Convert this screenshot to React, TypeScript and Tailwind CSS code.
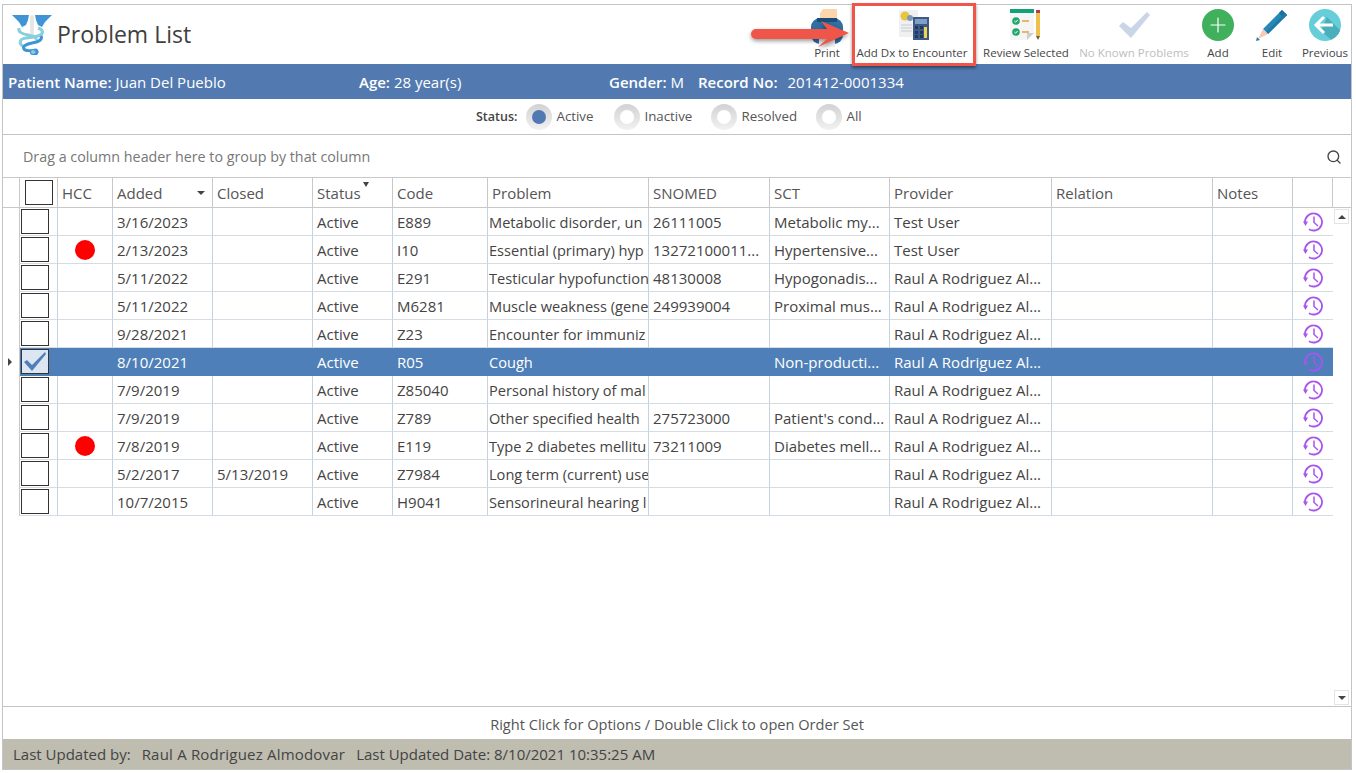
import { Search, Plus } from "lucide-react";

const COLS =
  "grid grid-cols-[17px_38px_55px_100px_100px_80px_95px_161px_121px_120px_162px_161px_80px_40px]";

type Row = {
  added: string;
  closed?: string;
  code: string;
  problem: string;
  snomed?: string;
  sct?: string;
  provider: string;
  hcc?: boolean;
  selected?: boolean;
};

const RAUL = "Raul A Rodriguez Al...";

const rows: Row[] = [
  { added: "3/16/2023", code: "E889", problem: "Metabolic disorder, un", snomed: "26111005", sct: "Metabolic my...", provider: "Test User" },
  { added: "2/13/2023", code: "I10", problem: "Essential (primary) hyp", snomed: "13272100011...", sct: "Hypertensive...", provider: "Test User", hcc: true },
  { added: "5/11/2022", code: "E291", problem: "Testicular hypofunction", snomed: "48130008", sct: "Hypogonadis...", provider: RAUL },
  { added: "5/11/2022", code: "M6281", problem: "Muscle weakness (gene", snomed: "249939004", sct: "Proximal mus...", provider: RAUL },
  { added: "9/28/2021", code: "Z23", problem: "Encounter for immuniz", provider: RAUL },
  { added: "8/10/2021", code: "R05", problem: "Cough", sct: "Non-producti...", provider: RAUL, selected: true },
  { added: "7/9/2019", code: "Z85040", problem: "Personal history of mal", provider: RAUL },
  { added: "7/9/2019", code: "Z789", problem: "Other specified health", snomed: "275723000", sct: "Patient's cond...", provider: RAUL },
  { added: "7/8/2019", code: "E119", problem: "Type 2 diabetes mellitu", snomed: "73211009", sct: "Diabetes mell...", provider: RAUL, hcc: true },
  { added: "5/2/2017", closed: "5/13/2019", code: "Z7984", problem: "Long term (current) use", provider: RAUL },
  { added: "10/7/2015", code: "H9041", problem: "Sensorineural hearing l", provider: RAUL },
];

function Logo() {
  return (
    <svg width="40" height="40" viewBox="0 0 40 40" className="shrink-0">
      <path d="M0 0h17l-1 5-2 5-4 2-3-5-3-3z" fill="#3f94d6" />
      <path d="M40 0H23l1 5 2 5 4 2 3-5 3-3z" fill="#3f94d6" />
      <rect x="18" y="0" width="4" height="24" rx="2" fill="#e6e6e6" />
      <path d="M26 13c6 2 6 6 0 8-6 2-15 1-17 4-2 3 0 6 4 7" fill="none" stroke="#86d0de" strokeWidth="3" />
      <path d="M7 13c-1 4 3 6 9 7 5 1 9 2 8 5" fill="none" stroke="#86d0de" strokeWidth="3" />
      <path d="M29 21c2 4-3 6-9 7-5 1-10 3-8 6 1 2 8 2 12 1 2 1 1 4-1 4-3 0-4-1-4-3" fill="none" stroke="#3f94d6" strokeWidth="3" />
      <circle cx="21" cy="37" r="2" fill="#86d0de" />
    </svg>
  );
}

function PrintIcon() {
  return (
    <svg width="32" height="38" viewBox="0 0 32 38" className="mb-[-6px]">
      <path d="M9 4l3-4h14v14H9z" fill="#fbd6ac" />
      <rect x="0" y="9" width="32" height="26" rx="9" fill="#2f6fa5" />
      <rect x="6" y="9" width="20" height="4" fill="#1c4d78" />
      <rect x="8" y="30" width="16" height="8" fill="#f2f2f2" />
    </svg>
  );
}

function CalcIcon() {
  return (
    <svg width="30" height="30" viewBox="0 0 30 30" className="mb-[1px] ml-[3px]">
      <rect x="0" y="0" width="19" height="27" fill="#eef0f2" />
      <circle cx="6" cy="6" r="4.5" fill="#e9c53f" />
      <circle cx="11" cy="8" r="3" fill="#7d97bd" />
      <path d="M2 15h11M2 18h11M2 21h11" stroke="#c9cdd2" strokeWidth="1" />
      <rect x="14" y="7" width="16" height="23" fill="#3c5a85" />
      <rect x="16" y="9" width="12" height="5" fill="#7f9ec8" />
      <path d="M16 16h3v3h-3zM21 16h3v3h-3zM16 21h3v3h-3zM21 21h3v3h-3zM16 25h3v3h-3zM21 25h3v3h-3z" fill="#23395c" />
      <rect x="25" y="17" width="3" height="11" fill="#f2d34c" />
    </svg>
  );
}

function ReviewIcon() {
  return (
    <svg width="32" height="32" viewBox="0 0 32 32">
      <path d="M0 0h24v24l-7 7H0z" fill="#f4f5f4" />
      <rect x="0" y="0" width="24" height="4" fill="#12a178" />
      <path d="M17 31v-7h7z" fill="#cfcfcf" />
      <circle cx="6" cy="12" r="3.8" fill="#20a76c" />
      <circle cx="6" cy="23" r="3.8" fill="#20a76c" />
      <path d="M4.4 12l1.2 1.2 2-2.2M4.4 23l1.2 1.2 2-2.2" fill="none" stroke="#fff" strokeWidth="1" />
      <path d="M12 12h7M12 23h7" stroke="#e8a13c" strokeWidth="1.5" />
      <rect x="26" y="1" width="4" height="3" fill="#b33a5e" />
      <rect x="26" y="4" width="4" height="23" fill="#efc04a" />
      <path d="M26 27h4l-2 4z" fill="#6b5a3a" />
    </svg>
  );
}

function NoKnownIcon() {
  return (
    <svg width="33" height="26" viewBox="0 0 33 26" className="mb-[3px]">
      <path d="M1 14l4-4 8 6L29 0l3 3-19 23z" fill="#c9d6e8" />
    </svg>
  );
}

function AddIcon() {
  return (
    <div className="flex h-8 w-8 items-center justify-center rounded-full bg-[#41b05c]">
      <Plus size={24} strokeWidth={1.2} className="text-white" />
    </div>
  );
}

function EditIcon() {
  return (
    <svg width="32" height="32" viewBox="0 0 32 32">
      <path d="M7 20L26 1l5 5-19 19z" fill="#2589b8" />
      <path d="M23 4l5 5 3-3-5-5z" fill="#1c6f99" />
      <path d="M10 23L29 4l2 2-19 19z" fill="#1f7aa6" />
      <path d="M7 20l5 5-10 5z" fill="#f6c9b4" />
      <path d="M1 28l3 3-4 1z" fill="#2a7fa8" />
    </svg>
  );
}

function PreviousIcon() {
  return (
    <svg width="32" height="32" viewBox="0 0 32 32">
      <clipPath id="prev-clip">
        <circle cx="16" cy="16" r="16" />
      </clipPath>
      <circle cx="16" cy="16" r="16" fill="#66ced9" />
      <path d="M12 22l6-14 16 16-8 10z" fill="#4aaebd" clipPath="url(#prev-clip)" />
      <path d="M15 8l-8 8 8 8M8 16h16" fill="none" stroke="#fff" strokeWidth="3" />
    </svg>
  );
}

function HistoryIcon() {
  return (
    <svg width="21" height="20" viewBox="0 0 21 20" className="shrink-0">
      <path d="M2 10A8.5 8.5 0 1 1 6 17.2" fill="none" stroke="#a855f0" strokeWidth="1.8" />
      <path d="M0 9.5h5L2.5 14z" fill="#a855f0" />
      <path d="M11 4.5V10.5L15 14" fill="none" stroke="#a855f0" strokeWidth="1.5" />
    </svg>
  );
}

function ToolButton({
  label,
  width,
  muted,
  children,
}: {
  label: string;
  width: string;
  muted?: boolean;
  children: React.ReactNode;
}) {
  return (
    <div className={`flex h-full flex-col items-center justify-end pb-[4px] ${width}`}>
      <div className="flex h-[36px] items-end justify-center pb-[4px]">{children}</div>
      <span className={`text-[11.5px] leading-[15px] whitespace-nowrap ${muted ? "text-[#bdbdbd]" : "text-[#444]"}`}>
        {label}
      </span>
    </div>
  );
}

function Radio({ label, labelWidth, active }: { label: string; labelWidth: string; active?: boolean }) {
  return (
    <div className="flex items-center gap-[4px]">
      <div className="flex h-[26px] w-[26px] items-center justify-center rounded-full bg-gradient-to-b from-[#d2d2d2] to-[#f2f2f2]">
        <div className={`h-[14px] w-[14px] rounded-full ${active ? "bg-[#5079b3]" : "bg-white"}`} />
      </div>
      <span className={`text-[13.3px] whitespace-nowrap text-[#555] ${labelWidth}`}>{label}</span>
    </div>
  );
}

function Box({ checked }: { checked?: boolean }) {
  return (
    <div
      className={`flex h-[25px] w-[28px] items-center justify-center border-[1.5px] border-[#333] ${
        checked ? "bg-[#dce6f2]" : "bg-white"
      }`}
    >
      {checked && (
        <svg width="24" height="20" viewBox="0 0 24 20">
          <path d="M1 10l3-2 5 5L22 0l1 2L9 19z" fill="#4f7fb8" />
        </svg>
      )}
    </div>
  );
}

function Cell({
  children,
  selected,
  tight,
}: {
  children?: React.ReactNode;
  selected?: boolean;
  tight?: boolean;
}) {
  return (
    <div
      className={`overflow-hidden border-r border-b pt-[1px] leading-[26px] whitespace-nowrap ${
        tight ? "pl-[1px] text-[14.6px]" : "pl-[4px] text-[15px]"
      } ${selected ? "border-[#4f7fb8] bg-[#4f7fb8] text-white" : "border-r-[#c5d3e0] border-b-[#d5dce4] text-[#444]"}`}
    >
      {children}
    </div>
  );
}

function HeaderCell({ children }: { children?: React.ReactNode }) {
  return (
    <div className="relative border-r border-[#c8c8c8] pt-[1px] pl-[4px] text-[15px] leading-[28px] whitespace-nowrap text-[#555]">
      {children}
    </div>
  );
}

export default function App() {
  return (
    <div className="h-[773px] w-[1356px] overflow-hidden bg-white pt-[4px] pl-[2px] font-['Open_Sans',sans-serif]">
      <div className="relative flex h-[766px] w-[1350px] flex-col border border-[#c4c4c4]">
        <div className="flex h-[59px] shrink-0 items-center justify-between">
          <div className="flex items-center gap-[5px] pl-[9px]">
            <Logo />
            <h1 className="text-[23px] leading-none font-medium text-[#404040]">Problem List</h1>
          </div>
          <div className="flex h-full items-stretch">
            <ToolButton label="Print" width="w-[44px]">
              <PrintIcon />
            </ToolButton>
            <ToolButton label="Add Dx to Encounter" width="w-[126px]">
              <CalcIcon />
            </ToolButton>
            <ToolButton label="Review Selected" width="w-[102px]">
              <ReviewIcon />
            </ToolButton>
            <ToolButton label="No Known Problems" width="w-[114px]" muted>
              <NoKnownIcon />
            </ToolButton>
            <ToolButton label="Add" width="w-[54px]">
              <AddIcon />
            </ToolButton>
            <ToolButton label="Edit" width="w-[54px]">
              <EditIcon />
            </ToolButton>
            <ToolButton label="Previous" width="w-[52px]">
              <PreviousIcon />
            </ToolButton>
          </div>
        </div>

        <div className="flex h-[35px] shrink-0 items-center bg-[#527ab0] pt-[1px] pl-[5px] text-[15px] text-white">
          <div className="w-[351px]">
            <span className="font-semibold">Patient Name:</span> Juan Del Pueblo
          </div>
          <div className="w-[250px]">
            <span className="font-semibold">Age:</span> 28 year(s)
          </div>
          <div className="w-[89px]">
            <span className="font-semibold">Gender:</span> M
          </div>
          <div>
            <span className="mr-[6px] font-semibold">Record No:</span> 201412-0001334
          </div>
        </div>

        <div className="flex h-[35px] shrink-0 items-center pt-[1px] pl-[473px]">
          <span className="mr-[9px] text-[12.5px] font-semibold text-[#444]">Status:</span>
          <div className="flex gap-[20px]">
            <Radio label="Active" labelWidth="w-[38px]" active />
            <Radio label="Inactive" labelWidth="w-[47px]" />
            <Radio label="Resolved" labelWidth="w-[55px]" />
            <Radio label="All" labelWidth="w-[20px]" />
          </div>
        </div>

        <div className="relative flex-1 border-y border-[#c4c4c4]">
          <div className="flex h-[43px] items-center justify-between border-b border-[#c8c8c8] pt-[1px] pr-[9px] pl-[20px]">
            <span className="text-[14.3px] text-[#777]">Drag a column header here to group by that column</span>
            <Search size={16} strokeWidth={2} className="text-[#444]" />
          </div>

          <div className={`${COLS} h-[30px] border-b border-[#c8c8c8]`}>
            <div className="border-r border-[#c8c8c8]" />
            <div className="flex items-center justify-end border-r border-[#c8c8c8] pr-[4px]">
              <Box />
            </div>
            <HeaderCell>HCC</HeaderCell>
            <HeaderCell>
              Added
              <span className="absolute top-[13px] right-[7px] h-0 w-0 border-x-[4px] border-t-[4px] border-x-transparent border-t-[#444]" />
            </HeaderCell>
            <HeaderCell>Closed</HeaderCell>
            <HeaderCell>
              Status
              <span className="absolute top-[4px] left-[50px] h-0 w-0 border-x-[3px] border-t-[5px] border-x-transparent border-t-[#444]" />
            </HeaderCell>
            <HeaderCell>Code</HeaderCell>
            <HeaderCell>Problem</HeaderCell>
            <HeaderCell>SNOMED</HeaderCell>
            <HeaderCell>SCT</HeaderCell>
            <HeaderCell>Provider</HeaderCell>
            <HeaderCell>Relation</HeaderCell>
            <HeaderCell>Notes</HeaderCell>
            <HeaderCell />
          </div>

          {rows.map((r) => (
            <div key={r.added + r.code} className={`${COLS} h-[28px]`}>
              <div className="flex items-center justify-center border-r border-[#c8c8c8] pr-[2px]">
                {r.selected && (
                  <span className="h-0 w-0 border-y-[4px] border-l-[4px] border-y-transparent border-l-[#444]" />
                )}
              </div>
              <div
                className={`flex items-center border-r border-b pl-[1px] ${
                  r.selected ? "border-[#4f7fb8] bg-[#4f7fb8]" : "border-r-[#c5d3e0] border-b-[#d5dce4]"
                }`}
              >
                <Box checked={r.selected} />
              </div>
              <Cell selected={r.selected}>
                {r.hcc && <div className="mt-[3px] ml-[13px] h-[20px] w-[20px] rounded-full bg-[#ff0000]" />}
              </Cell>
              <Cell selected={r.selected}>{r.added}</Cell>
              <Cell selected={r.selected}>{r.closed}</Cell>
              <Cell selected={r.selected}>Active</Cell>
              <Cell selected={r.selected}>{r.code}</Cell>
              <Cell selected={r.selected} tight>
                {r.problem}
              </Cell>
              <Cell selected={r.selected}>{r.snomed}</Cell>
              <Cell selected={r.selected}>{r.sct}</Cell>
              <Cell selected={r.selected}>{r.provider}</Cell>
              <Cell selected={r.selected} />
              <Cell selected={r.selected} />
              <div
                className={`flex items-center justify-center border-b ${
                  r.selected ? "border-[#4f7fb8] bg-[#4f7fb8]" : "border-[#d5dce4]"
                }`}
              >
                <HistoryIcon />
              </div>
            </div>
          ))}

          <div className="absolute top-[74px] right-[2px] flex h-[15px] w-[15px] items-center justify-center border border-[#e4e4e4]">
            <span className="h-0 w-0 border-x-[4px] border-b-[4px] border-x-transparent border-b-[#444]" />
          </div>
          <div className="absolute right-[2px] bottom-[1px] flex h-[15px] w-[15px] items-center justify-center border border-[#e4e4e4]">
            <span className="h-0 w-0 border-x-[4px] border-t-[4px] border-x-transparent border-t-[#444]" />
          </div>
        </div>

        <div className="flex h-[32px] shrink-0 items-center justify-center pt-[3px] text-[14.6px] text-[#555]">
          Right Click for Options / Double Click to open Order Set
        </div>
        <div className="flex h-[30px] shrink-0 items-center bg-[#bfbcb0] pl-[10px] text-[15px] text-[#444]">
          <span className="mr-[11px]">Last Updated by:</span>
          <span className="mr-[11px] tracking-[0.2px]">Raul A Rodriguez Almodovar</span>
          <span>Last Updated Date: 8/10/2021 10:35:25 AM</span>
        </div>

        <div className="absolute top-[-2px] left-[849px] h-[63px] w-[124px] border-[3px] border-[#f0554a] shadow-[0_2px_3px_rgba(0,0,0,0.45)]" />
        <svg width="100" height="34" viewBox="0 0 100 34" className="absolute top-[13px] left-[748px] drop-shadow-[0_2px_2px_rgba(0,0,0,0.4)]">
          <path d="M5 11H76L70 3l28 12-31 14 9-8H5a5 5 0 0 1 0-10z" fill="#f0554a" />
        </svg>
      </div>
    </div>
  );
}
